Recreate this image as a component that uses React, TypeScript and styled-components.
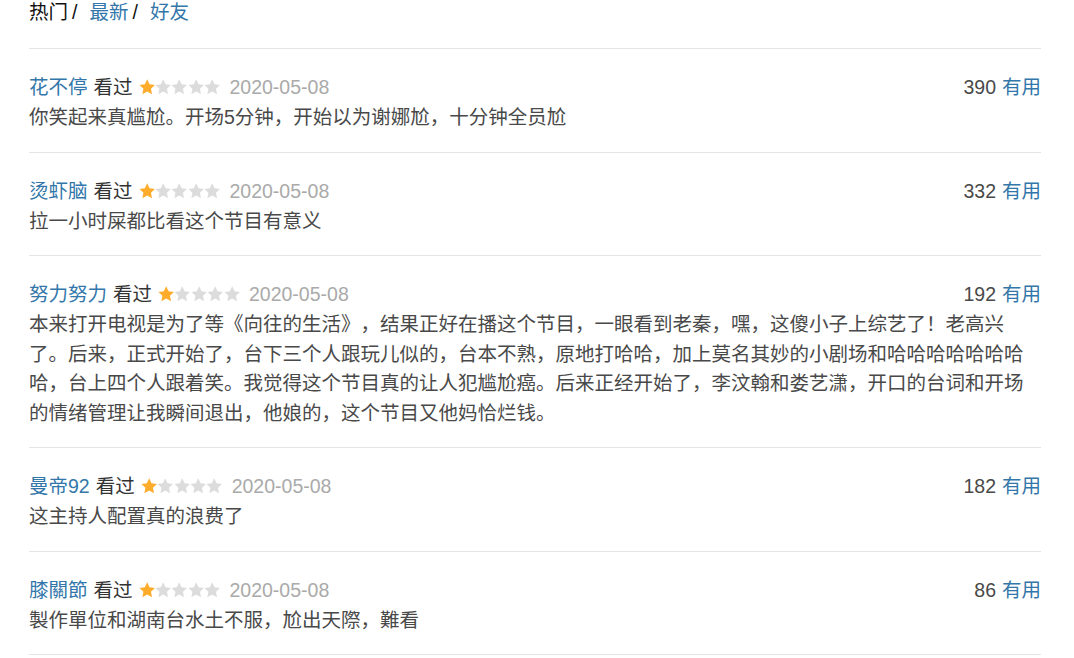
import styled, { createGlobalStyle } from "styled-components";

const GlobalStyle = createGlobalStyle`
  body {
    margin: 0;
    background: #fff;
    font-family: "Liberation Sans", "Noto Sans CJK SC", sans-serif;
    font-size: 19.5px;
    color: #494949;
    text-spacing-trim: space-all;
  }
`;

const Page = styled.div`
  width: 1012px;
  padding-left: 29px;
`;

const Tabs = styled.div`
  line-height: 24px;
  padding-bottom: 24px;
  border-bottom: 1px solid #e5e5e5;
  color: #111;
`;

const Tab = styled.span<{ $active?: boolean }>`
  color: ${(p) => (p.$active ? "#111" : "#3377aa")};
`;

const Slash = styled.span`
  color: #111;
  margin: 0 12px 0 4px;
`;

const Review = styled.div`
  padding: 23px 0 19px;
  border-bottom: 1px solid #e5e5e5;
`;

const Meta = styled.div`
  display: flex;
  align-items: center;
  line-height: 30px;
`;

const Name = styled.span`
  color: #3377aa;
`;

const Watched = styled.span`
  color: #333;
  margin-left: 6px;
`;

const Stars = styled.span`
  display: inline-flex;
  margin-left: 6px;
`;

const DateText = styled.span`
  color: #aaa;
  margin-left: 9px;
`;

const Votes = styled.span`
  margin-left: auto;
  color: #494949;
`;

const Useful = styled.span`
  color: #3377aa;
  margin-left: 6px;
`;

const Content = styled.p`
  margin: 1px 0 0;
  line-height: 29.5px;
  color: #494949;
`;

function Star({ on }: { on: boolean }) {
  return (
    <svg width="16.4" height="16" viewBox="0.5 0.5 23 22.5">
      <polygon
        points="12,1 15.3,8 22.9,9 17.3,14.2 18.8,21.8 12,18.1 5.2,21.8 6.7,14.2 1.1,9 8.7,8"
        fill={on ? "#ffac2d" : "#dcdcdc"}
      />
    </svg>
  );
}

const reviews = [
  { name: "花不停", votes: 390, text: "你笑起来真尴尬。开场5分钟，开始以为谢娜尬，十分钟全员尬" },
  { name: "烫虾脑", votes: 332, text: "拉一小时屎都比看这个节目有意义" },
  {
    name: "努力努力",
    votes: 192,
    text: "本来打开电视是为了等《向往的生活》，结果正好在播这个节目，一眼看到老秦，嘿，这傻小子上综艺了！老高兴了。后来，正式开始了，台下三个人跟玩儿似的，台本不熟，原地打哈哈，加上莫名其妙的小剧场和哈哈哈哈哈哈哈哈，台上四个人跟着笑。我觉得这个节目真的让人犯尴尬癌。后来正经开始了，李汶翰和娄艺潇，开口的台词和开场的情绪管理让我瞬间退出，他娘的，这个节目又他妈恰烂钱。",
  },
  { name: "曼帝92", votes: 182, text: "这主持人配置真的浪费了" },
  { name: "膝關節", votes: 86, text: "製作單位和湖南台水土不服，尬出天際，難看" },
];

export default function App() {
  return (
    <Page>
      <GlobalStyle />
      <Tabs>
        <Tab $active>热门</Tab>
        <Slash>/</Slash>
        <Tab>最新</Tab>
        <Slash>/</Slash>
        <Tab>好友</Tab>
      </Tabs>
      {reviews.map((r) => (
        <Review key={r.name}>
          <Meta>
            <Name>{r.name}</Name>
            <Watched>看过</Watched>
            <Stars>
              {[0, 1, 2, 3, 4].map((i) => (
                <Star key={i} on={i === 0} />
              ))}
            </Stars>
            <DateText>2020-05-08</DateText>
            <Votes>{r.votes}</Votes>
            <Useful>有用</Useful>
          </Meta>
          <Content>{r.text}</Content>
        </Review>
      ))}
    </Page>
  );
}
